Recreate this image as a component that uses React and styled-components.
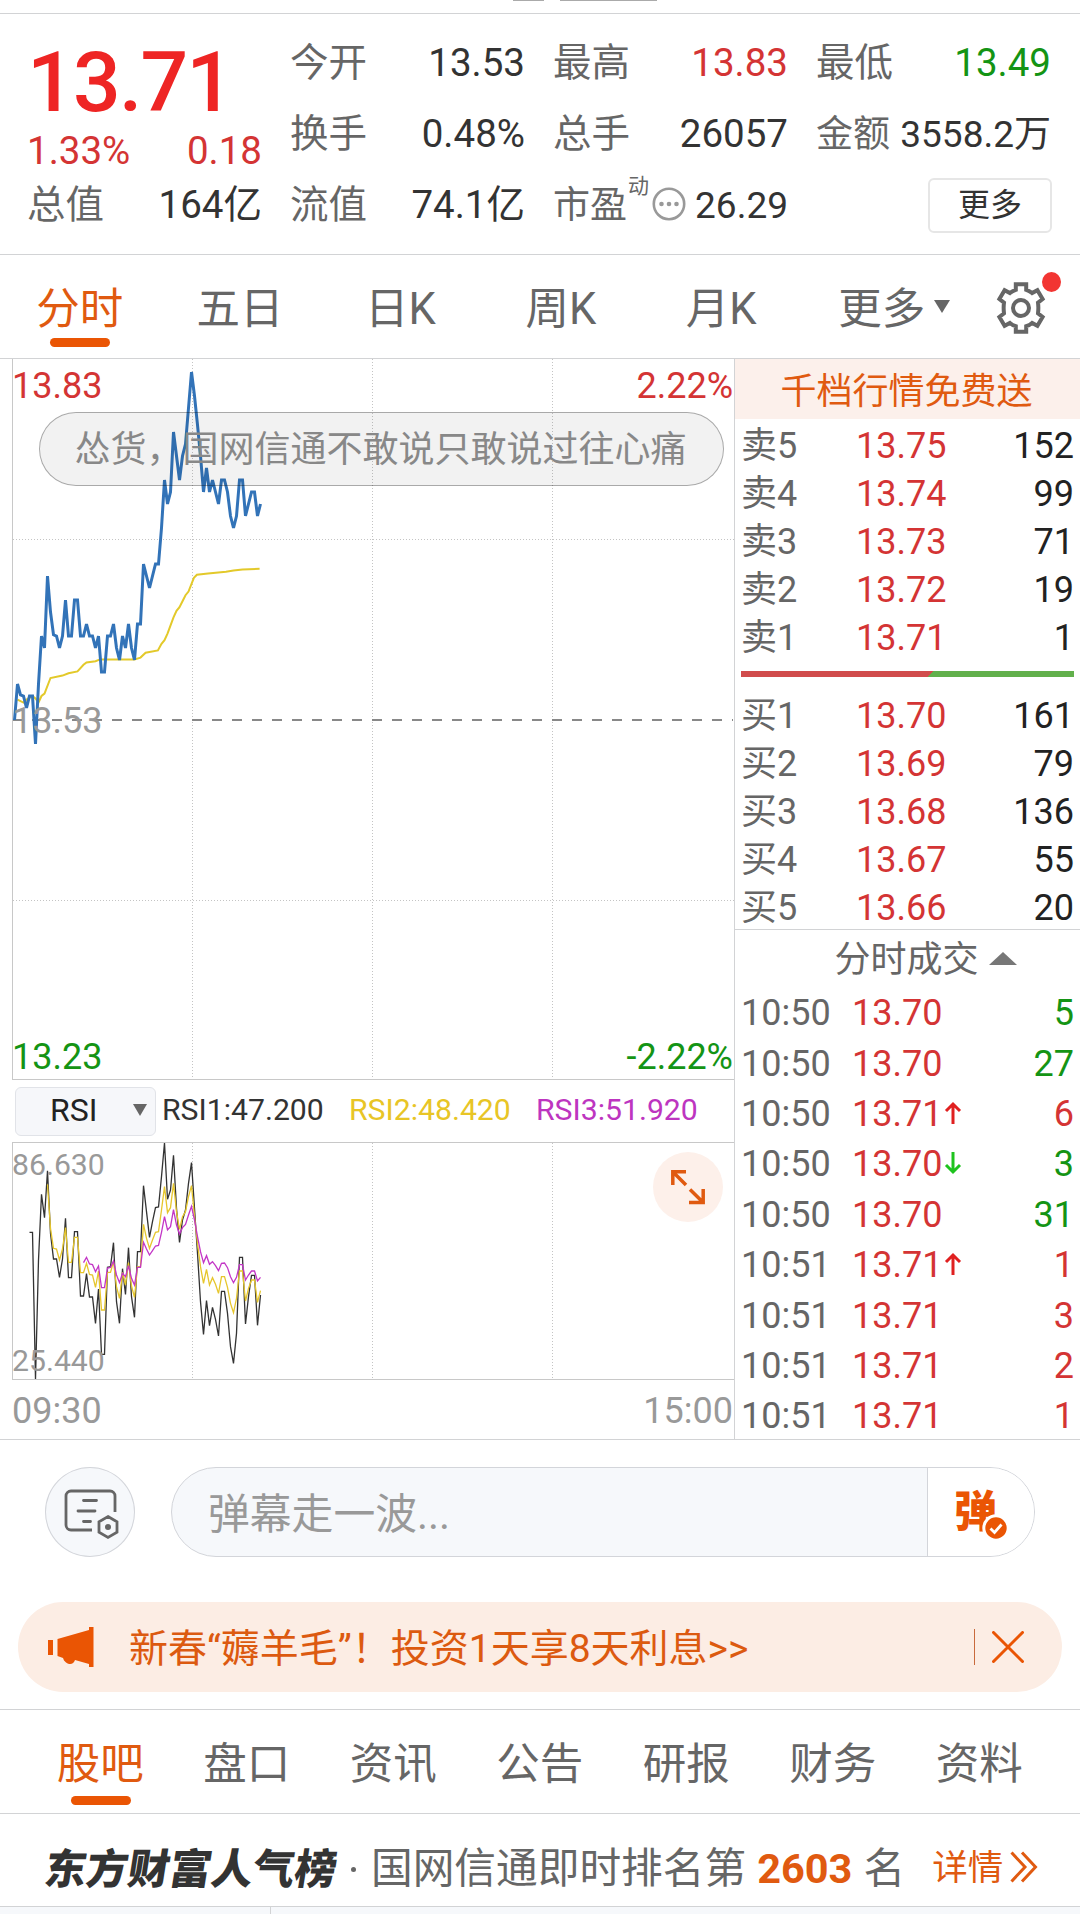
import React from "react";
import styled, { createGlobalStyle } from "styled-components";

const GlobalStyle = createGlobalStyle`
  * {
    box-sizing: border-box;
  }
  body {
    margin: 0;
    background-color: #fff;
    font-family: Roboto, "Noto Sans CJK SC", sans-serif;
    color: #666;
    line-height: 1;
  }
`;

const RED = "#d43434";
const GREEN = "#149414";
const ORANGE = "#ea5504";
const ORANGE_TEXT = "#e05a10";
const LINE = "#d2d3d5";

const sells = [
  ["卖5", "13.75", 152],
  ["卖4", "13.74", 99],
  ["卖3", "13.73", 71],
  ["卖2", "13.72", 19],
  ["卖1", "13.71", 1],
];

const buys = [
  ["买1", "13.70", 161],
  ["买2", "13.69", 79],
  ["买3", "13.68", 136],
  ["买4", "13.67", 55],
  ["买5", "13.66", 20],
];

const deals = [
  { time: "10:50", price: "13.70", count: 5, color: GREEN },
  { time: "10:50", price: "13.70", count: 27, color: GREEN },
  { time: "10:50", price: "13.71", dir: "up", count: 6, color: RED },
  { time: "10:50", price: "13.70", dir: "down", count: 3, color: GREEN },
  { time: "10:50", price: "13.70", count: 31, color: GREEN },
  { time: "10:51", price: "13.71", dir: "up", count: 1, color: RED },
  { time: "10:51", price: "13.71", count: 3, color: RED },
  { time: "10:51", price: "13.71", count: 2, color: RED },
  { time: "10:51", price: "13.71", count: 1, color: RED },
];

const infoTabs = ["股吧", "盘口", "资讯", "公告", "研报", "财务", "资料"];

// 每分钟价格，单位 0.01，相对昨收 13.53
const prices = [
  0, 3, 2.1, 2, 1, 2, 2, -2, 3, 7, 6, 12, 9, 7.1, 7, 6, 7, 10, 7, 7, 10, 10, 7,
  7, 8, 7, 7, 6, 7, 4, 4, 7, 7, 8, 6, 5, 7, 6, 8, 6, 5, 8, 8, 13, 12, 11, 12,
  13, 13, 16, 20, 18, 19, 24, 22, 20, 22, 23, 26, 29, 27, 24.6, 22, 19, 21, 19,
  20, 19, 18, 20, 20, 19, 17, 16, 17, 20, 20, 17, 18, 19, 19, 17, 18,
];

// 均价线 [分钟, 价差]
const average = [
  [2, 1.7], [4, 1.45], [5, 1.7], [7, 2], [8, 1.8], [9, 1.45], [10, 2],
  [11, 2.2], [13, 3.5], [17, 3.7], [19, 3.9], [22, 4.05], [24, 4.6],
  [25, 4.8], [28, 4.9], [29.5, 5.05], [41, 5.05], [43, 5.2], [44.7, 5.6],
  [48.8, 5.8], [50, 6.35], [51, 6.65], [52, 7.2], [54, 8.55], [55, 9.1],
  [56, 9.4], [57, 9.9], [58, 10.4], [59, 10.7], [60.8, 11.85], [61.8, 12.1],
  [65.5, 12.2], [71.5, 12.35], [74, 12.45], [77, 12.55], [82.7, 12.6],
];

const rsi1 = [
  577, 577, 1018, 660, 463, 533, 392, 580, 657, 657, 712, 657, 535, 713, 713,
  575, 575, 768, 768, 701, 771, 771, 850, 747, 943, 943, 682, 680, 608, 785,
  850, 686, 763, 623, 770, 832, 635, 635, 437, 515, 592, 545, 503, 501, 410,
  309, 478, 450, 346, 505, 607, 540, 510, 430, 368, 505, 640, 785, 883, 782,
  857, 802, 838, 888, 754, 754, 820, 920, 970, 880, 652, 652, 852, 770, 706,
  706, 856, 765,
];
const rsi2 = [
  433, 565, 625, 627, 660, 627, 563, 667, 667, 592, 592, 698, 698, 670, 703,
  705, 742, 693, 810, 810, 697, 697, 665, 740, 775, 697, 735, 668, 738, 772,
  680, 680, 553, 595, 625, 600, 577, 575, 510, 440, 518, 503, 430, 515, 568,
  530, 515, 470, 437, 530, 610, 680, 730, 688, 735, 713, 733, 760, 710, 710,
  742, 790, 818, 775, 693, 693, 783, 745, 720, 720, 787, 752,
];
const rsi3 = [
  668, 652, 672, 674, 695, 678, 743, 743, 684, 682, 663, 705, 728, 700, 710,
  677, 715, 735, 682, 682, 607, 627, 645, 632, 618, 616, 577, 530, 570, 560,
  509, 555, 582, 563, 553, 525, 499, 540, 590, 635, 668, 647, 673, 665, 677,
  692, 670, 669, 683, 710, 728, 712, 674, 674, 720, 705, 693, 693, 723, 712,
];

const minuteX = (m) => 3 * m - 1.5;
const priceY = (p) => 361 - p * 12;
const rsiY = (v) => v / 3 - 103;

const pricePoints = prices.map((p, i) => `${minuteX(i + 1)},${priceY(p)}`).join(" ");
const averagePoints = average.map(([m, p]) => `${minuteX(m)},${priceY(p)}`).join(" ");
const rsiPoints = (list, start) =>
  list.map((v, i) => `${minuteX(i + start)},${rsiY(v)}`).join(" ");

const DealArrow = ({ dir }) => (
  <svg width="18" height="24" viewBox="0 0 18 24" fill="none">
    {dir === "up" ? (
      <path d="M9 23V3M2 10l7-7 7 7" stroke="#e02020" strokeWidth="3" />
    ) : (
      <path d="M9 1v20M2 14l7 7 7-7" stroke="#1ec31e" strokeWidth="3" />
    )}
  </svg>
);

const GearIcon = () => (
  <svg width="52" height="52" viewBox="0 0 52 52" fill="none" stroke="#666" strokeWidth="4">
    <path d="M20.8 2.2h10.4v5.6c2.2 .7 4.2 1.8 5.9 3.3l5.3-2.9 5.2 8.9-4.6 3.5c.5 3.6 .5 6.8 0 10.8l4.6 3.5-5.2 8.9-5.3-2.9c-1.7 1.5-3.7 2.6-5.9 3.3v5.6H20.8v-5.6c-2.2-.7-4.2-1.8-5.9-3.3l-5.3 2.9-5.2-8.9 4.6-3.5c-.5-4-.5-7.2 0-10.8l-4.6-3.5 5.2-8.9 5.3 2.9c1.7-1.5 3.7-2.6 5.9-3.3z" />
    <circle cx="26" cy="26" r="8" />
  </svg>
);

const BarrageIcon = () => (
  <svg width="90" height="90" viewBox="0 0 90 90" fill="none" stroke="#666" strokeWidth="2.8" strokeLinecap="round">
    <path d="M47 63H26a5 5 0 0 1-5-5V29a5 5 0 0 1 5-5h39a5 5 0 0 1 5 5v16" strokeLinecap="butt" />
    <path d="M38.5 33.5h13M33 44h17M38.5 54.5h7" />
    <path d="M63 49.500l9 5.200v10.600l-9 5.200-9-5.200V54.700z" strokeLinecap="butt" />
    <circle cx="63" cy="60" r="3" fill="#666" stroke="none" />
  </svg>
);

const HornIcon = () => (
  <svg width="46" height="40" viewBox="0 0 46 40" fill={ORANGE}>
    <path d="M0 13h5v15H0zM9.5 12L41 3V0h4.500v40H41v-3l-14-4c-1 3-3 4.500-6 4-3-.5-4-3-5-3.500l-1-2.500-5.500-2z" />
  </svg>
);

const App = () => {
  return (
    <Page>
      <GlobalStyle />
      <TitleEdge>
        <TitleStub $w={31} />
        <TitleStub $w={97} />
      </TitleEdge>

      <Stats>
        <StatColumn>
          <Price>13.71</Price>
          <Change>
            <span>1.33%</span>
            <span>0.18</span>
          </Change>
          <Stat>
            总值<Value>164亿</Value>
          </Stat>
        </StatColumn>
        <StatColumn>
          <Stat>
            今开<Value>13.53</Value>
          </Stat>
          <Stat>
            换手<Value>0.48%</Value>
          </Stat>
          <Stat>
            流值<Value>74.1亿</Value>
          </Stat>
        </StatColumn>
        <StatColumn>
          <Stat>
            最高<Value $color={RED}>13.83</Value>
          </Stat>
          <Stat>
            总手<Value>26057</Value>
          </Stat>
          <Stat $tight>
            <PeLabel>
              市盈<PeMark>动</PeMark>
              <MoreDots width="34" height="34" viewBox="0 0 34 34" fill="#999">
                <circle cx="17" cy="17" r="15.2" fill="none" stroke="#999" strokeWidth="2.6" />
                <circle cx="9.5" cy="17" r="2.3" />
                <circle cx="17" cy="17" r="2.3" />
                <circle cx="24.5" cy="17" r="2.3" />
              </MoreDots>
            </PeLabel>
            <Value>26.29</Value>
          </Stat>
        </StatColumn>
        <StatColumn>
          <Stat>
            最低<Value $color={GREEN}>13.49</Value>
          </Stat>
          <Stat $tight>
            金额<Value>3558.2万</Value>
          </Stat>
          <MoreRow>
            <MoreButton>更多</MoreButton>
          </MoreRow>
        </StatColumn>
      </Stats>

      <PeriodTabs>
        <PeriodTab $active>分时</PeriodTab>
        <PeriodTab>五日</PeriodTab>
        <PeriodTab>日K</PeriodTab>
        <PeriodTab>周K</PeriodTab>
        <PeriodTab>月K</PeriodTab>
        <PeriodTab>
          更多
          <TabArrow />
        </PeriodTab>
        <Settings>
          <GearIcon />
          <RedDot />
        </Settings>
      </PeriodTabs>

      <Quote>
        <ChartSide>
          <PriceChart>
            <svg width="721" height="720" viewBox="0 0 721 720" fill="none">
              <path
                d="M179.5 0V720M359.5 0V720M539.5 0V720M0 180.5H721M0 541.5H721"
                stroke="#c4c4c4"
                strokeDasharray="1 2"
              />
              <path d="M-1 361H720" stroke="#888" strokeWidth="2" strokeDasharray="10 10" />
              <polyline points={averagePoints} stroke="#e3c92a" strokeWidth="2" />
              <polyline points={pricePoints} stroke="#3273b8" strokeWidth="3" />
            </svg>
            <AxisLabel $top={9} $color={RED}>13.83</AxisLabel>
            <AxisLabel $top={9} $right $color={RED}>2.22%</AxisLabel>
            <AxisLabel $top={344} $color="#999">13.53</AxisLabel>
            <AxisLabel $top={680} $color={GREEN}>13.23</AxisLabel>
            <AxisLabel $top={680} $right $color={GREEN}>-2.22%</AxisLabel>
            <Bullet>怂货，国网信通不敢说只敢说过往心痛</Bullet>
          </PriceChart>
          <RsiBar>
            <RsiSelect>
              RSI
              <SmallArrow />
            </RsiSelect>
            <RsiValue $color="#333">RSI1:47.200</RsiValue>
            <RsiValue $color="#e8c526">RSI2:48.420</RsiValue>
            <RsiValue $color="#bd35c0">RSI3:51.920</RsiValue>
          </RsiBar>
          <RsiChart>
            <svg width="721" height="236" viewBox="0 0 721 236" fill="none">
              <path d="M179.5 0V236M359.5 0V236M539.5 0V236" stroke="#c4c4c4" strokeDasharray="1 2" />
              <polyline points={rsiPoints(rsi1, 6)} stroke="#333" strokeWidth="1.3" />
              <polyline points={rsiPoints(rsi2, 12)} stroke="#e6c62c" strokeWidth="1.3" />
              <polyline points={rsiPoints(rsi3, 24)} stroke="#c336c6" strokeWidth="1.3" />
            </svg>
            <AxisLabel $small $top={7} $color="#999">86.630</AxisLabel>
            <AxisLabel $small $top={203} $color="#999">25.440</AxisLabel>
            <ExpandButton>
              <svg width="36" height="36" viewBox="0 0 36 36" fill="none" stroke={ORANGE_TEXT} strokeWidth="3.5">
                <path d="M16 2.8H2.8V16M2.8 2.8L16 16M19 33.5H33.200V20M33.200 33.500L20 20.500" />
              </svg>
            </ExpandButton>
          </RsiChart>
          <TimeAxis>
            <span>09:30</span>
            <span>15:00</span>
          </TimeAxis>
        </ChartSide>

        <BookSide>
          <Promo>千档行情免费送</Promo>
          <Book>
            {sells.map(([label, price, count]) => (
              <BookRow key={label}>
                <span>{label}</span>
                <BookPrice>{price}</BookPrice>
                <BookCount>{count}</BookCount>
              </BookRow>
            ))}
            <RatioBar />
            {buys.map(([label, price, count]) => (
              <BookRow key={label}>
                <span>{label}</span>
                <BookPrice>{price}</BookPrice>
                <BookCount>{count}</BookCount>
              </BookRow>
            ))}
          </Book>
          <DealTitle>
            分时成交
            <UpTriangle />
          </DealTitle>
          {deals.map((deal, i) => (
            <DealRow key={i}>
              <span>{deal.time}</span>
              <DealPrice>
                {deal.price}
                {deal.dir && <DealArrow dir={deal.dir} />}
              </DealPrice>
              <BookCount $color={deal.color}>{deal.count}</BookCount>
            </DealRow>
          ))}
        </BookSide>
      </Quote>

      <BarrageBar>
        <BarrageSetting>
          <BarrageIcon />
        </BarrageSetting>
        <BarrageInput>
          <Placeholder>弹幕走一波...</Placeholder>
          <BarrageSwitch>
            弹
            <CheckBadge>
              <svg width="28" height="28" viewBox="0 0 28 28" fill="none">
                <circle cx="14" cy="14" r="12.2" fill={ORANGE} stroke="#fff" strokeWidth="3" />
                <path d="M8.500 14.500l4 4 7-8" stroke="#fff" strokeWidth="2.800" />
              </svg>
            </CheckBadge>
          </BarrageSwitch>
        </BarrageInput>
      </BarrageBar>

      <NoticeWrap>
        <Notice>
          <HornIcon />
          <NoticeText>新春“薅羊毛”！投资1天享8天利息&gt;&gt;</NoticeText>
          <NoticeDivider />
          <svg width="32" height="32" viewBox="0 0 32 32" stroke={ORANGE} strokeWidth="3" strokeLinecap="round">
            <path d="M1.5 1.5l29 29M30.5 1.5l-29 29" />
          </svg>
        </Notice>
      </NoticeWrap>

      <InfoTabs>
        {infoTabs.map((name, i) => (
          <InfoTab key={name} $active={i === 0}>
            {name}
          </InfoTab>
        ))}
      </InfoTabs>

      <Rank>
        <RankLogo>东方财富人气榜</RankLogo>
        <RankDot />
        <span>国网信通即时排名第</span>
        <RankNumber>2603</RankNumber>
        <span>名</span>
        <RankLink>
          详情
          <svg width="28" height="32" viewBox="0 0 28 32" fill="none" stroke={ORANGE_TEXT} strokeWidth="3">
            <path d="M1.5 1.5L15 16 1.5 30.5M12 1.5L25.5 16 12 30.5" />
          </svg>
        </RankLink>
      </Rank>
      <Bottom>
        <BottomCell />
      </Bottom>
    </Page>
  );
};

const Page = styled.div`
  width: 1080px;
  height: 1914px;
  overflow: hidden;
  background-color: #fff;
`;

const TitleEdge = styled.div`
  display: flex;
  gap: 16px;
  height: 14px;
  padding-left: 513px;
  border-bottom: 1px solid ${LINE};
`;

const TitleStub = styled.div`
  width: ${(props) => props.$w}px;
  height: 1px;
  background-color: #aaa;
`;

const Stats = styled.section`
  display: grid;
  grid-template-columns: repeat(4, 235px);
  column-gap: 28px;
  height: 241px;
  padding: 14px 28px 0 27px;
  border-bottom: 1px solid ${LINE};
`;

const StatColumn = styled.div`
  display: flex;
  flex-direction: column;
`;

const Stat = styled.div`
  display: flex;
  align-items: center;
  justify-content: space-between;
  height: 71px;
  font-size: ${(props) => (props.$tight ? "37px" : "38.5px")};
  white-space: nowrap;
`;

const Value = styled.span`
  color: ${(props) => props.$color || "#333"};
`;

const Price = styled.div`
  height: 104px;
  padding-top: 13px;
  font-size: 84px;
  font-weight: 500;
  letter-spacing: -1.8px;
  color: #ee2524;
`;

const Change = styled.div`
  display: flex;
  justify-content: space-between;
  height: 38px;
  font-size: 38.5px;
  color: ${RED};
`;

const PeLabel = styled.span`
  display: flex;
  align-items: center;
`;

const PeMark = styled.span`
  align-self: flex-start;
  margin: -11px 3px 0 1px;
  font-size: 21px;
`;

const MoreDots = styled.svg`
  margin-top: -4px;
`;

const MoreRow = styled.div`
  display: flex;
  align-items: center;
  justify-content: flex-end;
  height: 70px;
`;

const MoreButton = styled.button`
  width: 124px;
  height: 55px;
  margin-right: -1px;
  padding: 0;
  border: 2px solid #e6e6e6;
  border-radius: 6px;
  background-color: #fff;
  font: 32px/1 Roboto, "Noto Sans CJK SC", sans-serif;
  color: #333;
`;

const PeriodTabs = styled.nav`
  display: grid;
  grid-template-columns: repeat(6, 160.4px) 1fr;
  height: 104px;
  border-bottom: 1px solid ${LINE};
`;

const Tab = styled.div`
  position: relative;
  display: flex;
  align-items: center;
  justify-content: center;
  font-size: 43.5px;
  color: ${(props) => (props.$active ? ORANGE_TEXT : "#666")};

  &::after {
    content: "";
    display: ${(props) => (props.$active ? "block" : "none")};
    position: absolute;
    left: calc(50% - 30px);
    width: 60px;
    height: 9px;
    border-radius: 5px;
    background-color: ${ORANGE};
  }
`;

const PeriodTab = styled(Tab)`
  padding: 6px 1px 0 0;

  &::after {
    bottom: 11px;
  }
`;

const TabArrow = styled.i`
  position: absolute;
  left: 132px;
  top: 45px;
  border: 8px solid transparent;
  border-top: 13px solid #666;
  border-bottom: 0;
`;

const Settings = styled.div`
  position: relative;
  padding: 27px 0 0 33px;
`;

const RedDot = styled.i`
  position: absolute;
  left: 80px;
  top: 17px;
  width: 19px;
  height: 20px;
  border-radius: 50%;
  background-color: #f23532;
`;

const Quote = styled.section`
  display: flex;
  height: 1081px;
  border-bottom: 1px solid ${LINE};
`;

const ChartSide = styled.div`
  width: 735px;
  padding-left: 12px;
  border-right: 1px solid ${LINE};
`;

const PriceChart = styled.div`
  position: relative;
  height: 721px;
  border-left: 1px solid #c8c8c8;
  border-bottom: 1px solid #c8c8c8;

  svg {
    display: block;
  }
`;

const AxisLabel = styled.span`
  position: absolute;
  top: ${(props) => props.$top}px;
  ${(props) => (props.$right ? "right: 1px;" : "left: -1px;")}
  font-size: ${(props) => (props.$small ? "30.2px" : "36px")};
  color: ${(props) => props.$color};
`;

// 弹幕气泡
const Bullet = styled.div`
  position: absolute;
  left: 26px;
  top: 53px;
  display: flex;
  align-items: center;
  justify-content: center;
  width: 685px;
  height: 74px;
  padding: 2px 2px 0 0;
  border: 1.5px solid rgba(0, 0, 0, 0.3);
  border-radius: 37px;
  background-color: rgba(0, 0, 0, 0.05);
  font-size: 36px;
  color: #888;
`;

const RsiBar = styled.div`
  display: flex;
  align-items: center;
  height: 62px;
  padding: 0 0 0 3px;
`;

const RsiSelect = styled.div`
  display: flex;
  align-items: center;
  justify-content: space-between;
  width: 141px;
  height: 49px;
  margin-right: 6px;
  padding: 0 8px 2px 34px;
  border: 1px solid #e1e3e8;
  border-radius: 6px;
  background-color: #f6f7fa;
  font-size: 32px;
  color: #222;
`;

const SmallArrow = styled.i`
  border: 7.5px solid transparent;
  border-top: 12px solid #666;
  border-bottom: 0;
`;

const RsiValue = styled.span`
  width: 187px;
  padding-bottom: 2px;
  font-size: 30.2px;
  color: ${(props) => props.$color};
`;

const RsiChart = styled.div`
  position: relative;
  height: 238px;
  border: 1px solid #c8c8c8;
  border-right: 0;

  svg {
    display: block;
  }
`;

const ExpandButton = styled.div`
  position: absolute;
  right: 11px;
  top: 9px;
  display: flex;
  align-items: center;
  justify-content: center;
  width: 70px;
  height: 70px;
  border-radius: 50%;
  background-color: #fdf0ea;
`;

const TimeAxis = styled.div`
  display: flex;
  align-items: center;
  justify-content: space-between;
  height: 59px;
  padding: 2px 1px 0 0;
  font-size: 36px;
  color: #999;
`;

const BookSide = styled.div`
  flex: 1;
`;

const Promo = styled.div`
  display: flex;
  align-items: center;
  justify-content: center;
  height: 60px;
  padding: 6px 2px 0 0;
  background-color: #fcf0eb;
  font-size: 36px;
  color: ${ORANGE_TEXT};
`;

const Book = styled.div`
  height: 510px;
  padding: 2px 6px 0;
`;

const BookRow = styled.div`
  display: grid;
  grid-template-columns: 115px 1fr auto;
  align-items: center;
  height: 48px;
  padding-top: 2px;
  font-size: 36px;
`;

const BookPrice = styled.span`
  color: ${RED};
`;

const BookCount = styled.span`
  color: ${(props) => props.$color || "#222"};
`;

const RatioBar = styled.div`
  height: 6px;
  margin: 10px 0 14px;
  background: linear-gradient(135deg, #d14c4c 0 56.8%, #62b04c 56.8%);
`;

const DealTitle = styled.div`
  display: flex;
  align-items: center;
  justify-content: center;
  gap: 10px;
  height: 58px;
  padding: 2px 0 0 36px;
  border-top: 1px solid ${LINE};
  font-size: 36px;
`;

const UpTriangle = styled.i`
  margin-top: -2px;
  border: 14px solid transparent;
  border-bottom: 13px solid #777;
  border-top: 0;
`;

const DealRow = styled.div`
  display: grid;
  grid-template-columns: 111px 1fr auto;
  align-items: center;
  height: 50.4px;
  padding: 2px 6px 0;
  font-size: 36px;
`;

const DealPrice = styled.span`
  display: flex;
  align-items: center;
  gap: 2px;
  color: ${RED};

  svg {
    margin-top: -2px;
  }
`;

const BarrageBar = styled.section`
  display: flex;
  gap: 36px;
  height: 162px;
  padding: 27px 45px 0;
`;

const BarrageSetting = styled.div`
  width: 90px;
  height: 90px;
  border-radius: 50%;
  box-shadow: inset 0 0 0 1px #d3d5da;
  background-color: #f6f8fb;
`;

const BarrageInput = styled.div`
  display: flex;
  flex: 1;
  height: 90px;
  border: 1px solid #d3d5da;
  border-radius: 45px;
  overflow: hidden;
  background-color: #f6f8fb;
`;

const Placeholder = styled.div`
  display: flex;
  align-items: center;
  flex: 1;
  padding: 5px 0 0 36px;
  font-size: 41.8px;
  color: #999;
`;

const BarrageSwitch = styled.div`
  position: relative;
  width: 107px;
  padding: 23px 0 0 26px;
  border-left: 1px solid #d3d5da;
  background-color: #fff;
  font-size: 43px;
  font-weight: 900;
  color: ${ORANGE};
`;

const CheckBadge = styled.span`
  position: absolute;
  left: 54px;
  top: 46px;

  svg {
    display: block;
  }
`;

const NoticeWrap = styled.section`
  height: 108px;
  padding: 0 18px;
  border-bottom: 1px solid ${LINE};
`;

const Notice = styled.div`
  display: flex;
  align-items: center;
  height: 90px;
  padding: 0 38px 0 30px;
  border-radius: 45px;
  background-color: #fcede4;
`;

const NoticeText = styled.span`
  flex: 1;
  margin-left: 35px;
  padding-top: 4px;
  font-size: 39px;
  color: #dc5a10;
`;

const NoticeDivider = styled.i`
  width: 1px;
  height: 36px;
  margin-right: 17px;
  background-color: #c96a3c;
`;

const InfoTabs = styled.nav`
  display: grid;
  grid-template-columns: repeat(7, 146.5px);
  height: 104px;
  padding-left: 28px;
  border-bottom: 1px solid ${LINE};
`;

const InfoTab = styled(Tab)`
  padding: 6px 2px 0 0;

  &::after {
    bottom: 8px;
  }
`;

const Rank = styled.section`
  display: flex;
  align-items: center;
  height: 93px;
  padding: 18px 0 0 45px;
  border-bottom: 1px solid ${LINE};
  font-size: 41.7px;
  white-space: nowrap;
`;

const RankLogo = styled.span`
  width: 293px;
  padding-top: 1px;
  font-size: 41.7px;
  font-weight: 900;
  color: #333;
  transform: skewX(-9deg);
`;

const RankDot = styled.i`
  width: 5px;
  height: 5px;
  margin: 0 15px 0 13px;
  border-radius: 50%;
  background-color: #666;
`;

const RankNumber = styled.span`
  margin: 0 11px;
  font-size: 41.5px;
  font-weight: 700;
  color: ${ORANGE_TEXT};
`;

const RankLink = styled.span`
  display: flex;
  align-items: center;
  gap: 7px;
  margin-left: 27px;
  font-size: 35.5px;
  color: ${ORANGE_TEXT};

  svg {
    margin-top: -4px;
  }
`;

const Bottom = styled.div`
  height: 8px;
  background-color: #f6f8fb;
`;

const BottomCell = styled.div`
  width: 271px;
  height: 8px;
  border-right: 1px solid ${LINE};
`;

export default App;
